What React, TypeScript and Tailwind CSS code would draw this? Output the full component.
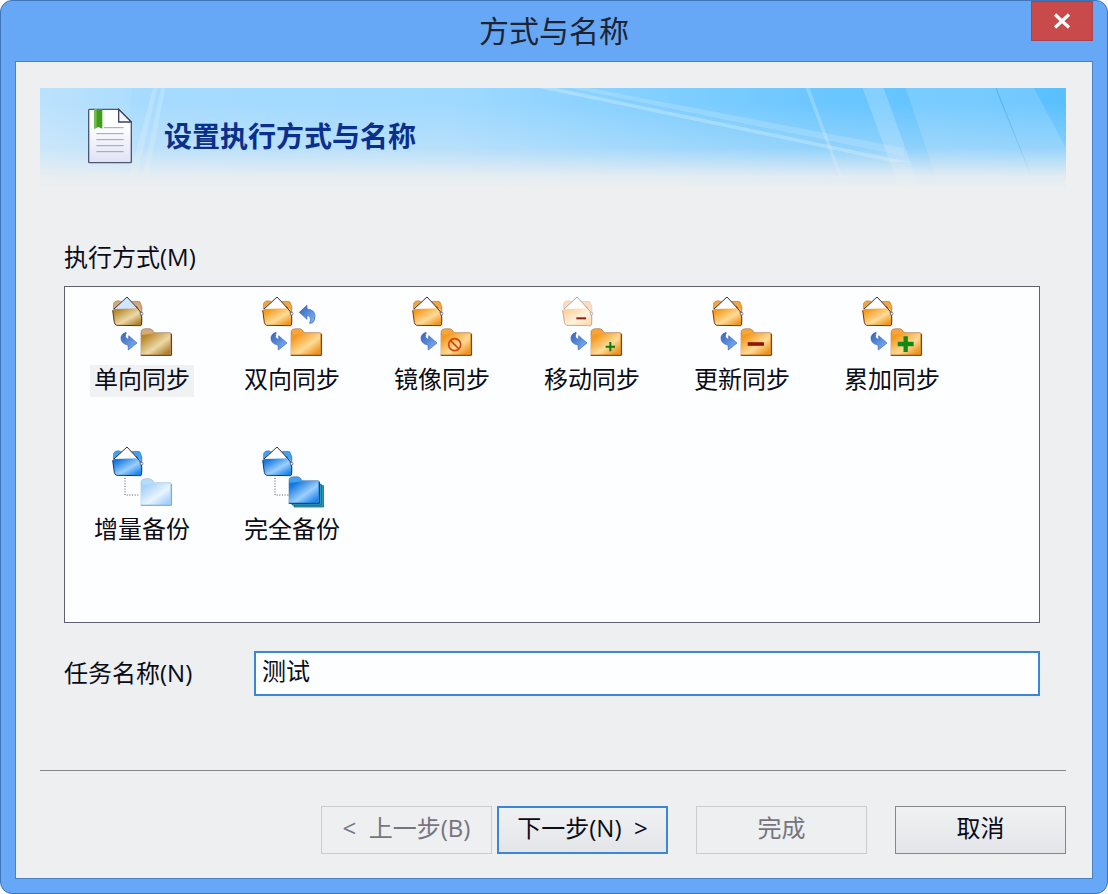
import React, { useState } from "react";

type Overlay = "none" | "forbid" | "plus" | "minus" | "bigPlus";
type Tone = "tan" | "orange" | "pale" | "blue" | "lightBlue";

interface Mode {
  id: string;
  label: string;
  source: Tone;
  target: Tone;
  overlay?: Overlay;
  twoWay?: boolean;
  backup?: boolean;
  stacked?: boolean;
}

const modes: Mode[] = [
  { id: "one-way", label: "单向同步", source: "tan", target: "tan" },
  { id: "two-way", label: "双向同步", source: "orange", target: "orange", twoWay: true },
  { id: "mirror", label: "镜像同步", source: "orange", target: "orange", overlay: "forbid" },
  { id: "move", label: "移动同步", source: "pale", target: "orange", overlay: "plus" },
  { id: "update", label: "更新同步", source: "orange", target: "orange", overlay: "minus" },
  { id: "append", label: "累加同步", source: "orange", target: "orange", overlay: "bigPlus" },
  { id: "incremental", label: "增量备份", source: "blue", target: "lightBlue", backup: true },
  { id: "full", label: "完全备份", source: "blue", target: "blue", backup: true, stacked: true },
];

// start, shine, end, back, edge, paper
const tones: Record<Tone, string[]> = {
  tan: ["#b8892c", "#ecd9a8", "#b0822e", "#d9a878", "#5a3010", "#cfe6ff"],
  orange: ["#f59a1c", "#ffdb98", "#ee9420", "#f6a43c", "#7a3206", "#ffffff"],
  pale: ["#fbd3a0", "#fff2dd", "#fbdcb4", "#fbdcc0", "#d3a688", "#ffffff"],
  blue: ["#1478dc", "#9ccfff", "#1f86ea", "#3fa2f2", "#0b3a78", "#ffffff"],
  lightBlue: ["#a9d2fa", "#e9f5ff", "#a6d0fa", "#b5dcfa", "#7ba4cc", "#ffffff"],
};

const ToneGradient = ({ id, tone }: { id: string; tone: Tone }) => (
  <linearGradient id={id} x1="0" y1="0" x2="1" y2="1">
    <stop offset="0.15" stopColor={tones[tone][0]} />
    <stop offset="0.58" stopColor={tones[tone][1]} />
    <stop offset="0.9" stopColor={tones[tone][2]} />
  </linearGradient>
);

const OpenFolder = ({ tone, fill }: { tone: Tone; fill: string }) => {
  const [, , , back, edge, paper] = tones[tone];
  return (
    <g>
      <path d="M10 42 L11 24 Q16 16 26 17 L34 20 L80 19 Q92 18 92 26 L96 36 L95 84 L88 90 Z" fill={back} stroke={edge} strokeOpacity="0.5" strokeWidth="2" />
      <path d="M51 6 L12 43 L90 48 Z" fill={paper} />
      <path d="M12 42 L51 6 L92 50" fill="none" stroke={tone === "pale" ? "#b9a6a0" : "#3b3440"} strokeWidth="3" />
      <path d="M8 46 Q9 42 16 42 L86 40 Q91 40 92 46 L94 90 L18 90 Q14 88 13 80 Z" fill={fill} />
      <path d="M8 46 L13 82 Q15 90 20 91 L93 92" fill="none" stroke={edge} strokeWidth="3" />
      <path d="M90 52 Q98 62 94 91" fill="none" stroke={edge} strokeWidth="3" />
      <path d="M78 34 L94 54" fill="none" stroke={tone === "pale" ? "#b9a6a0" : "#3b3440"} strokeWidth="3" />
      <circle cx="95" cy="56" r="4" fill="#fff" stroke={tone === "pale" ? "#9c9cb8" : "#454868"} strokeWidth="2" />
    </g>
  );
};

const ClosedFolder = ({ tone, fill }: { tone: Tone; fill: string }) => {
  const [, , , back, edge] = tones[tone];
  return (
    <g>
      <path d="M93 114 L94 107 Q98 101 106 101 L120 101 Q128 103 132 113 L180 113 Q185 114 185 119 L185 180 L93 180 Z" fill={back} stroke={edge} strokeOpacity="0.6" strokeWidth="2" />
      <path d="M93 120 Q100 118 112 118 L132 115 L181 115 L181 179 L93 179 Z" fill={fill} />
      <path d="M184 117 L184 181 L92 181" fill="none" stroke={edge} strokeWidth="3" />
    </g>
  );
};

const ArrowDown = () => (
  <path d="M48 112 Q36 116 33 126 Q31 146 54 150 L55 165 L81 144 L56 122 L56 134 Q47 132 46 124 Q46 117 49 114 Z" fill="url(#arrow)" stroke="#3d62b8" strokeWidth="2" />
);

const ArrowUp = () => (
  <path d="M118 52 L141 31 L141 42 Q164 44 165 62 Q166 76 157 84 L149 85 Q153 72 150 67 Q148 62 141 61 L141 73 Z" fill="url(#arrow)" stroke="#3d62b8" strokeWidth="2" />
);

const ModeIcon = ({ mode }: { mode: Mode }) => {
  const source = `${mode.id}-source`;
  const target = `${mode.id}-target`;
  return (
    <svg viewBox="0 0 192 192" className="size-16" aria-hidden="true">
      <defs>
        <ToneGradient id={source} tone={mode.source} />
        <ToneGradient id={target} tone={mode.target} />
        <linearGradient id="arrow" x1="0" y1="0" x2="1" y2="1">
          <stop offset="0" stopColor="#2f62bd" />
          <stop offset="1" stopColor="#86b6f6" />
        </linearGradient>
      </defs>
      <OpenFolder tone={mode.source} fill={`url(#${source})`} />
      {mode.backup ? (
        <path d="M45 99 V150 H88" fill="none" stroke="#4b5563" strokeWidth="3" strokeDasharray="3 5" />
      ) : (
        <ArrowDown />
      )}
      {mode.twoWay && <ArrowUp />}
      {mode.stacked ? (
        <g>
          <path d="M102 122 H191 V186 H102 Z" fill="#2a9ab8" stroke="#0d4770" strokeWidth="2" />
          <path d="M96 118 H184 V180 H96 Z" fill="#37a9cf" stroke="#0d4770" strokeWidth="2" />
          <g transform="translate(-6 -6)">
            <ClosedFolder tone="blue" fill={`url(#${target})`} />
          </g>
        </g>
      ) : (
        <ClosedFolder tone={mode.target} fill={`url(#${target})`} />
      )}
      {mode.overlay === "forbid" && (
        <g fill="none" stroke="#d9400c" strokeWidth="5">
          <circle cx="134" cy="149" r="18" />
          <path d="M121 136 L147 162" />
        </g>
      )}
      {mode.overlay === "plus" && (
        <g>
          <path d="M49 70 H78" stroke="#8e1c08" strokeWidth="6" />
          <path d="M151 141 V169 M137 155 H165" stroke="#0c7a12" strokeWidth="6" />
        </g>
      )}
      {mode.overlay === "minus" && <path d="M113 147 H162" stroke="#8e1808" strokeWidth="11" />}
      {mode.overlay === "bigPlus" && (
        <path d="M137 124 V171 M113 147 H161" stroke="#0f8a14" strokeWidth="13" />
      )}
    </svg>
  );
};

const DocumentIcon = () => (
  <svg viewBox="0 0 132 164" className="h-14 w-11 shrink-0" aria-hidden="true">
    <defs>
      <linearGradient id="page" x1="0" y1="0" x2="0" y2="1">
        <stop offset="0.3" stopColor="#ffffff" />
        <stop offset="1" stopColor="#dfe3f3" />
      </linearGradient>
    </defs>
    <path d="M5 2 H92 L130 40 V159 Q130 162 127 162 H5 Q2 162 2 159 V5 Q2 2 5 2 Z" fill="url(#page)" stroke="#4d5578" strokeWidth="4" />
    <path d="M92 2 V40 H130 Z" fill="#f6f8ff" stroke="#3d4468" strokeWidth="4" />
    <path d="M19 1 H43 V60 L31 55 L19 60 Z" fill="#3f9e1d" />
    <path d="M19 1 H26 V57 L19 60 Z" fill="#71bd4c" />
    <path d="M48 57 H107 M25 75 H107 M25 93 H107 M25 111 H107 M25 129 H107" stroke="#9aa3c4" strokeWidth="3" />
  </svg>
);

const BannerArt = () => (
  <svg viewBox="0 0 1024 100" preserveAspectRatio="none" className="absolute inset-0 size-full" aria-hidden="true">
    <defs>
      <linearGradient id="sky">
        <stop offset="0" stopColor="#b8e1fd" />
        <stop offset="0.1" stopColor="#a6dbff" />
        <stop offset="0.4" stopColor="#a0d9ff" />
        <stop offset="0.75" stopColor="#6cc7ff" />
        <stop offset="1" stopColor="#5ac0ff" />
      </linearGradient>
      <linearGradient id="fade" x1="0" y1="0" x2="0" y2="1">
        <stop offset="0.15" stopColor="#edeff1" stopOpacity="0" />
        <stop offset="0.6" stopColor="#edeff1" stopOpacity="0.3" />
        <stop offset="0.88" stopColor="#edeff1" stopOpacity="0.9" />
        <stop offset="1" stopColor="#edeff1" />
      </linearGradient>
    </defs>
    <rect width="1024" height="100" fill="url(#sky)" />
    <g fill="#ffffff">
      <path d="M0 0 H92 L78 100 H0 Z" opacity="0.06" />
      <path d="M113 0 H117 L94 100 H86 Z M121 0 H125 L106 100 H100 Z" opacity="0.18" />
      <path d="M498 0 H515 L868 74 L850 74 Z" opacity="0.25" />
      <path d="M530 0 H548 L862 60 V68 Z" opacity="0.16" />
      <path d="M764 0 H768 L801 90 H798 Z" opacity="0.22" />
      <path d="M821 0 H842 L878 100 H858 Z" opacity="0.2" />
      <path d="M864 0 H992 L1024 60 V100 H898 Z" opacity="0.14" />
    </g>
    <path d="M954 0 L990 90" stroke="#2f9fe0" strokeOpacity="0.5" strokeWidth="1" />
    <rect width="1024" height="100" fill="url(#fade)" />
  </svg>
);

interface WizardButtonProps {
  children: React.ReactNode;
  disabled?: boolean;
  primary?: boolean;
}

const WizardButton: React.FC<WizardButtonProps> = ({ children, disabled, primary }) => {
  const look = disabled
    ? "border border-[#c9cdd0] text-[#77747f]"
    : primary
      ? "border-2 border-[#3c86d8] bg-linear-to-b from-[#f0f1f3] to-[#e4e5e8]"
      : "border border-[#85868a] bg-linear-to-b from-[#f0f1f3] to-[#e4e5e8]";
  return (
    <button type="button" disabled={disabled} className={`h-12 w-[171px] pb-1 text-center whitespace-pre ${look}`}>
      {children}
    </button>
  );
};

const App: React.FC = () => {
  const [selected, setSelected] = useState("one-way");
  const [taskName, setTaskName] = useState("测试");

  return (
    <div className="flex min-h-screen flex-col rounded-xl border border-[#3f74b8] bg-[#66a8f6] px-3.5 pb-3.5 font-['Open_Sans','Noto_Sans_CJK_SC',sans-serif] text-2xl leading-8 text-[#0b0b16]">
      <header className="grid h-[60px] grid-cols-[1fr_auto_1fr] items-center">
        <h1 className="col-start-2 text-[30px] text-[#1c2333]">方式与名称</h1>
        <button type="button" aria-label="关闭" className="flex h-10 w-[62px] items-center justify-center self-start justify-self-end border border-[#a8424e] bg-[#c84a4a]">
          <svg viewBox="0 0 18 16" className="h-4 w-[18px]" aria-hidden="true">
            <path d="M2 1.5 L16 14.5 M16 1.5 L2 14.5" stroke="#fff" strokeWidth="3.2" />
          </svg>
        </button>
      </header>

      <main className="flex flex-1 flex-col border border-[#4a80c4] bg-[#edeff1] pt-[26px] pr-[26px] pb-6 pl-6">
        <div className="relative h-[100px]">
          <BannerArt />
          <div className="relative flex h-24 items-center gap-8 pl-12">
            <DocumentIcon />
            <h2 className="text-[28px] font-semibold text-[#0b2f8c]">设置执行方式与名称</h2>
          </div>
        </div>

        <div className="mt-[53px] pr-[26px] pl-6">
          <h3 id="mode-label">执行方式(M)</h3>
          <div
            role="listbox"
            aria-labelledby="mode-label"
            className="mt-[13px] grid auto-rows-[150px] grid-cols-[repeat(auto-fill,150px)] border border-[#5f6074] bg-[#fcfeff] pt-2 pr-0.5 pb-[27px] pl-0.5"
          >
            {modes.map((mode) => (
              <button
                key={mode.id}
                type="button"
                role="option"
                aria-selected={mode.id === selected}
                onClick={() => setSelected(mode.id)}
                className="flex flex-col items-center gap-1.5"
              >
                <ModeIcon mode={mode} />
                <span className={mode.id === selected ? "bg-[#eff1f3] px-1 pb-1 leading-7" : "px-1 pb-1 leading-7"}>{mode.label}</span>
              </button>
            ))}
          </div>

          <div className="mt-7 flex items-center">
            <label htmlFor="task-name" className="w-[190px] shrink-0 pb-0.5">任务名称(N)</label>
            <input
              id="task-name"
              type="text"
              value={taskName}
              onChange={(e) => setTaskName(e.target.value)}
              className="h-[45px] min-w-0 flex-1 border-2 border-[#3c86d8] bg-[#fcfeff] px-1.5 pb-2 outline-none"
            />
          </div>
        </div>

        <footer className="mt-auto flex justify-end gap-7 border-t border-[#85868a] pt-[35px]">
          <div className="flex gap-[5px]">
            <WizardButton disabled>{"<  上一步(B)"}</WizardButton>
            <WizardButton primary>{"下一步(N)  >"}</WizardButton>
          </div>
          <WizardButton disabled>完成</WizardButton>
          <WizardButton>取消</WizardButton>
        </footer>
      </main>
    </div>
  );
};

export default App;
